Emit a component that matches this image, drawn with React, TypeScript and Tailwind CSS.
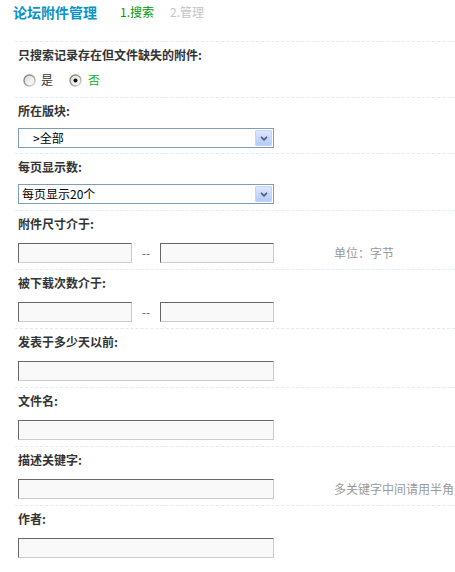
import type { ReactNode } from 'react'

const FONT = '"Noto Sans CJK SC", "Liberation Sans", sans-serif'

function Radio({ checked = false }: { checked?: boolean }) {
  return (
    <svg width="13" height="13" viewBox="0 0 13 13" className="shrink-0">
      <defs>
        <linearGradient id={checked ? 'rfill1' : 'rfill0'} x1="0" y1="0" x2="1" y2="1">
          <stop offset="0" stopColor="#dcdcd4" />
          <stop offset="1" stopColor="#ffffff" />
        </linearGradient>
        <linearGradient id={checked ? 'rline1' : 'rline0'} x1="0" y1="0" x2="1" y2="1">
          <stop offset="0" stopColor="#7b7b73" />
          <stop offset="0.6" stopColor="#a6a69e" />
          <stop offset="1" stopColor="#e4e4dc" />
        </linearGradient>
      </defs>
      <circle
        cx="6.5"
        cy="6.5"
        r="5.5"
        fill={`url(#${checked ? 'rfill1' : 'rfill0'})`}
        stroke={`url(#${checked ? 'rline1' : 'rline0'})`}
        strokeWidth="1.4"
      />
      {checked && <circle cx="6.5" cy="6.5" r="2" fill="#111" />}
    </svg>
  )
}

function FakeSelect({ text, indent = false }: { text: string; indent?: boolean }) {
  return (
    <div className="flex h-5 w-[256px] items-center border border-[#7f9db9] bg-white">
      <span className={`flex-1 text-xs leading-[18px] text-black ${indent ? 'pl-[14px]' : 'pl-[3px]'}`}>{text}</span>
      <span className="mr-px flex h-4 w-[17px] items-center justify-center rounded-[1px] border border-[#c3d3fd] bg-gradient-to-b from-[#dde7fe] to-[#b6caf8]">
        <svg width="8" height="5" viewBox="0 0 8 5">
          <path d="M1 0.8 L4 3.8 L7 0.8" fill="none" stroke="#4d6185" strokeWidth="1.8" />
        </svg>
      </span>
    </div>
  )
}

function TextBox({ w = 'w-[256px]' }: { w?: string }) {
  return (
    <input
      type="text"
      readOnly
      className={`block h-5 ${w} border border-t-[#666] border-l-[#666] border-r-[#ccc] border-b-[#ccc] bg-[#f9f9f9] outline-none`}
    />
  )
}

function Section({
  label,
  children,
  tip,
  labelH = 'h-[32px]',
  pb = 'pb-[6px]',
}: {
  label: string
  children: ReactNode
  tip?: string
  labelH?: string
  pb?: string
}) {
  return (
    <div className={`border-t border-dashed border-[#dcecf4] ${pb}`}>
      <div className={`${labelH} pl-[3px] pt-[4px] text-xs font-bold leading-[18px] text-[#333]`}>{label}</div>
      <div className="flex items-center pl-[3px]">
        <div className="w-[316px] shrink-0">{children}</div>
        {tip && <div className="min-w-0 overflow-hidden whitespace-nowrap text-xs text-[#999]">{tip}</div>}
      </div>
    </div>
  )
}

function Range() {
  return (
    <div className="flex items-center">
      <TextBox w="w-[114px]" />
      <span className="w-[28px] text-center text-xs text-[#666]">--</span>
      <TextBox w="w-[114px]" />
    </div>
  )
}

export default function App() {
  return (
    <div className="h-[572px] w-[455px] overflow-hidden bg-white" style={{ fontFamily: FONT }}>
      <div className="flex h-[41px] items-start pl-[13px]">
        <span className="text-[14px] font-bold leading-[24px] text-[#0a93c9]">论坛附件管理</span>
        <span className="ml-[23px] text-xs leading-[24px] text-[#009900]">1.搜索</span>
        <span className="ml-[16px] text-xs leading-[24px] text-[#c4c4c4]">2.管理</span>
      </div>
      <div className="pl-[15px]">
        <div className="border-t border-dashed border-[#dcecf4] pb-[5px]">
          <div className="h-[26px] pl-[3px] pt-[4px] text-xs font-bold leading-[18px] text-[#333]">只搜索记录存在但文件缺失的附件:</div>
          <div className="flex h-[24px] items-center pl-[8px] text-xs">
            <Radio />
            <span className="ml-[5px] text-[#333]">是</span>
            <span className="ml-[16px]">
              <Radio checked />
            </span>
            <span className="ml-[6px] text-[#17b417]">否</span>
          </div>
        </div>
        <Section label="所在版块:" labelH="h-[30px]" pb="pb-[5px]">
          <FakeSelect text=">全部" indent />
        </Section>
        <Section label="每页显示数:" labelH="h-[30px]" pb="pb-[6px]">
          <FakeSelect text="每页显示20个" />
        </Section>
        <Section label="附件尺寸介于:" tip="单位：字节">
          <Range />
        </Section>
        <Section label="被下载次数介于:">
          <Range />
        </Section>
        <Section label="发表于多少天以前:">
          <TextBox />
        </Section>
        <Section label="文件名:">
          <TextBox />
        </Section>
        <Section label="描述关键字:" tip={'多关键字中间请用半角逗号 "," 隔开'}>
          <TextBox />
        </Section>
        <Section label="作者:">
          <TextBox />
        </Section>
      </div>
    </div>
  )
}
